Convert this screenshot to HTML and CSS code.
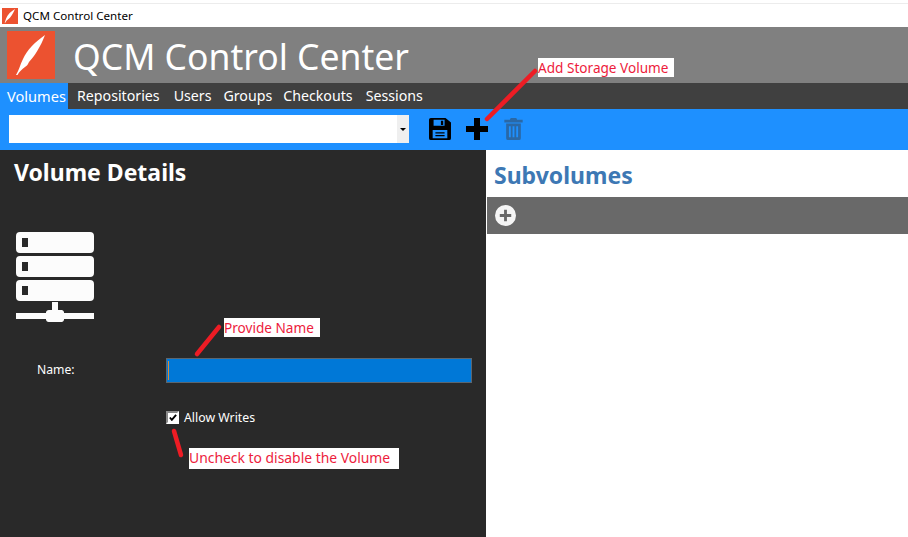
FILE: index.html
```html
<!DOCTYPE html>
<html lang="en">
<head>
<meta charset="utf-8">
<title>QCM Control Center</title>
<link rel="stylesheet" href="styles.css">
</head>
<body>
<div class="app">
  <div class="titlebar">
    <svg class="title-icon" viewBox="0 0 48 48"><rect width="48" height="48" fill="#ec5230"/><path d="M39 3C27 10 17 20 13 30C11 35 10 39 8 44L10 44C12 39 14 37 17 35C27 29 34 15 39 3Z" fill="#fff"/></svg>
    <span class="title-text">QCM Control Center</span>
  </div>
  <header class="banner">
    <svg class="logo" viewBox="0 0 48 48"><rect width="48" height="48" fill="#ec5230"/><path d="M38 4C28 11 20 19 16 28C13 34 12 39 9 44L10.500 44C12 41 15 38 18 36C20 35 21 33 22 31C27 26 34 15 38 4Z" fill="#fff"/></svg>
    <h1 class="app-name">QCM Control Center</h1>
  </header>
  <nav class="tabs">
    <a class="tab active">Volumes</a>
    <a class="tab">Repositories</a>
    <a class="tab">Users</a>
    <a class="tab">Groups</a>
    <a class="tab">Checkouts</a>
    <a class="tab">Sessions</a>
  </nav>
  <div class="toolbar">
    <div class="combo"><span class="combo-arrow"><i></i></span></div>
    <svg class="tool tool-save" viewBox="0 0 24 24"><path fill-rule="evenodd" d="M2 0H18L24 5V22A2 2 0 0 1 22 24H2A2 2 0 0 1 0 22V2A2 2 0 0 1 2 0ZM5 2V8.500H17V2ZM13 3H15.500V7.500H13ZM4 13V22H20V13Z" fill="#000"/><path d="M7 15.500H17V17H7ZM7 18.500H17V20H7Z" fill="#000"/></svg>
    <svg class="tool tool-add" viewBox="0 0 22 22"><path d="M8 0H14V8H22V14H14V22H8V14H0V8H8Z" fill="#000"/></svg>
    <svg class="tool tool-trash" viewBox="0 0 20 24"><path fill-rule="evenodd" d="M7 0H13L14 2H20V5H0V2H6ZM2 6H18V22A2 2 0 0 1 16 24H4A2 2 0 0 1 2 22ZM5 9V21H7V9ZM9 9V21H11V9ZM13 9V21H15V9Z" fill="#2a68a6"/></svg>
  </div>
  <main class="content">
    <section class="details">
      <h2 class="details-title">Volume Details</h2>
      <svg class="server" viewBox="0 0 78 90">
        <path fill-rule="evenodd" d="M4 0H74A4 4 0 0 1 78 4V17A4 4 0 0 1 74 21H4A4 4 0 0 1 0 17V4A4 4 0 0 1 4 0ZM6 6V15H12V6ZM4 24H74A4 4 0 0 1 78 28V41A4 4 0 0 1 74 45H4A4 4 0 0 1 0 41V28A4 4 0 0 1 4 24ZM6 30V39H12V30ZM4 48H74A4 4 0 0 1 78 52V65A4 4 0 0 1 74 69H4A4 4 0 0 1 0 65V52A4 4 0 0 1 4 48ZM6 54V63H12V54Z" fill="#fcfcfc"/>
        <path d="M36 70H42V78H46A3 3 0 0 1 48 80V81H78V87H48V88A3 3 0 0 1 46 90H33A3 3 0 0 1 30 88V87H0V81H30V80A3 3 0 0 1 33 78H36Z" fill="#fcfcfc"/>
      </svg>
      <div class="name-row">
        <label class="field-label">Name:</label>
        <div class="name-input"><i class="caret"></i></div>
      </div>
      <div class="check-row">
        <span class="checkbox"><svg viewBox="0 0 10 9"><path d="M1 4.500L3.500 7.500L9 1" fill="none" stroke="#000" stroke-width="2.400"/></svg></span>
        <span class="check-label">Allow Writes</span>
      </div>
    </section>
    <section class="subvolumes">
      <h2 class="sub-title">Subvolumes</h2>
      <div class="sub-bar">
        <svg class="sub-add" viewBox="0 0 22 22"><path fill-rule="evenodd" d="M11 0A11 11 0 1 1 11 22A11 11 0 1 1 11 0ZM9.500 5V9.500H5V12.500H9.500V17H12.500V12.500H17V9.500H12.500V5Z" fill="#f5f5f5"/></svg>
      </div>
    </section>
  </main>
  <div class="note note-add">Add Storage Volume</div>
  <div class="note note-name">Provide Name</div>
  <div class="note note-check">Uncheck to disable the Volume</div>
  <svg class="strokes" viewBox="0 0 908 537">
    <g stroke="#ed1c24" stroke-width="4.500" stroke-linecap="round" fill="none">
      <path d="M535 71L487 119"/>
      <path d="M219 327L197 354"/>
      <path d="M174 431L181 455"/>
    </g>
  </svg>
</div>
</body>
</html>
```
FILE: styles.css
```css
* { box-sizing: border-box; }
html, body { margin: 0; height: 100%; overflow: hidden; background: #fff; }
body { font-family: "Noto Sans", "Open Sans", sans-serif; }
.app { position: relative; width: 908px; height: 537px; display: flex; flex-direction: column; overflow: hidden; }
.titlebar { height: 27px; flex: none; display: flex; align-items: center; gap: 5px; padding: 4px 0 0 2px; background: linear-gradient(#fff 3px, #ececec 3px, #ececec 4px, #fff 4px); }
.title-icon { width: 16px; height: 16px; }
.title-text { font-size: 11.600px; color: #000; line-height: 16px; }
.banner { height: 56px; flex: none; background: #808080; display: flex; align-items: center; padding: 0 0 0 7px; gap: 18px; }
.logo { width: 48px; height: 48px; }
.app-name { margin: 4px 0 0; font-size: 35.500px; font-weight: 400; color: #fff; line-height: 1; }
.tabs { height: 26px; flex: none; background: #404040; display: flex; }
.tab { color: #fff; font-size: 14.200px; line-height: 26px; }
.tab.active { background: #1e90ff; width: 68px; padding-left: 7px; font-size: 14.600px; }
.tab:nth-child(2) { margin-left: 9px; }
.tab:nth-child(3) { margin-left: 14px; }
.tab:nth-child(4) { margin-left: 12px; }
.tab:nth-child(5) { margin-left: 11px; }
.tab:nth-child(6) { margin-left: 13px; }
.toolbar { height: 41px; flex: none; background: #1e90ff; display: flex; align-items: center; padding: 0 0 0 9px; }
.combo { width: 400px; height: 28px; background: #fff; display: flex; justify-content: flex-end; margin-top: -1px; }
.combo-arrow { width: 12px; background: #efefef; display: flex; align-items: center; justify-content: center; }
.combo-arrow i { width: 0; height: 0; border: 3px solid transparent; border-top: 3px solid #000; border-bottom: 0; }
.tool { flex: none; display: block; }
.tool-save { width: 22px; height: 22px; margin: -2px 0 0 20px; }
.tool-add { width: 22px; height: 22px; margin: -2px 0 0 15px; }
.tool-trash { width: 19px; height: 22px; margin: -2px 0 0 16px; }
.content { flex: 1; display: flex; min-height: 0; }
.details { width: 486px; flex: none; background: #292929; padding: 8px 14px 0 0; }
.details-title { margin: 0 0 0 14px; font-size: 23px; font-weight: 700; color: #fff; line-height: 29px; height: 29px; }
.server { display: block; width: 78px; height: 90px; margin: 45px 0 0 16px; }
.name-row { display: flex; align-items: center; margin-top: 36px; height: 25px; }
.field-label { width: 166px; padding-left: 37px; font-size: 12.200px; color: #fff; position: relative; top: -1px; }
.name-input { width: 306px; height: 25px; background: #0078d7; border: 1px solid #5b6670; padding: 2px 1px; }
.caret { display: block; width: 1px; height: 19px; background: #e08a2c; }
.check-row { display: flex; align-items: center; margin: 27px 0 0 166px; height: 14px; gap: 5px; }
.checkbox { width: 13px; height: 13px; background: #fff; border: 2px solid #8a8a8a; border-right-color: #fff; border-bottom-color: #fff; display: flex; align-items: center; justify-content: center; }
.checkbox svg { width: 8px; height: 7px; display: block; }
.check-label { font-size: 12.300px; color: #fff; }
.subvolumes { flex: 1; background: #fff; padding: 7px 0 0 1px; }
.sub-title { margin: 0 0 0 7px; font-size: 23px; font-weight: 700; color: #3d78b4; line-height: 36px; height: 40px; }
.sub-bar { height: 37px; background: #696969; display: flex; align-items: center; padding-left: 8px; }
.sub-add { width: 21px; height: 21px; display: block; }
.note { position: absolute; background: #fff; color: #ed1c3c; font-size: 13.600px; line-height: 19px; height: 19px; white-space: nowrap; }
.note-add { left: 538px; top: 58px; width: 136px; }
.note-name { left: 224px; top: 318px; width: 96px; }
.note-check { left: 189px; top: 448px; width: 210px; height: 21px; line-height: 20px; font-size: 13.900px; }
.strokes { position: absolute; inset: 0; width: 908px; height: 537px; pointer-events: none; }
```
